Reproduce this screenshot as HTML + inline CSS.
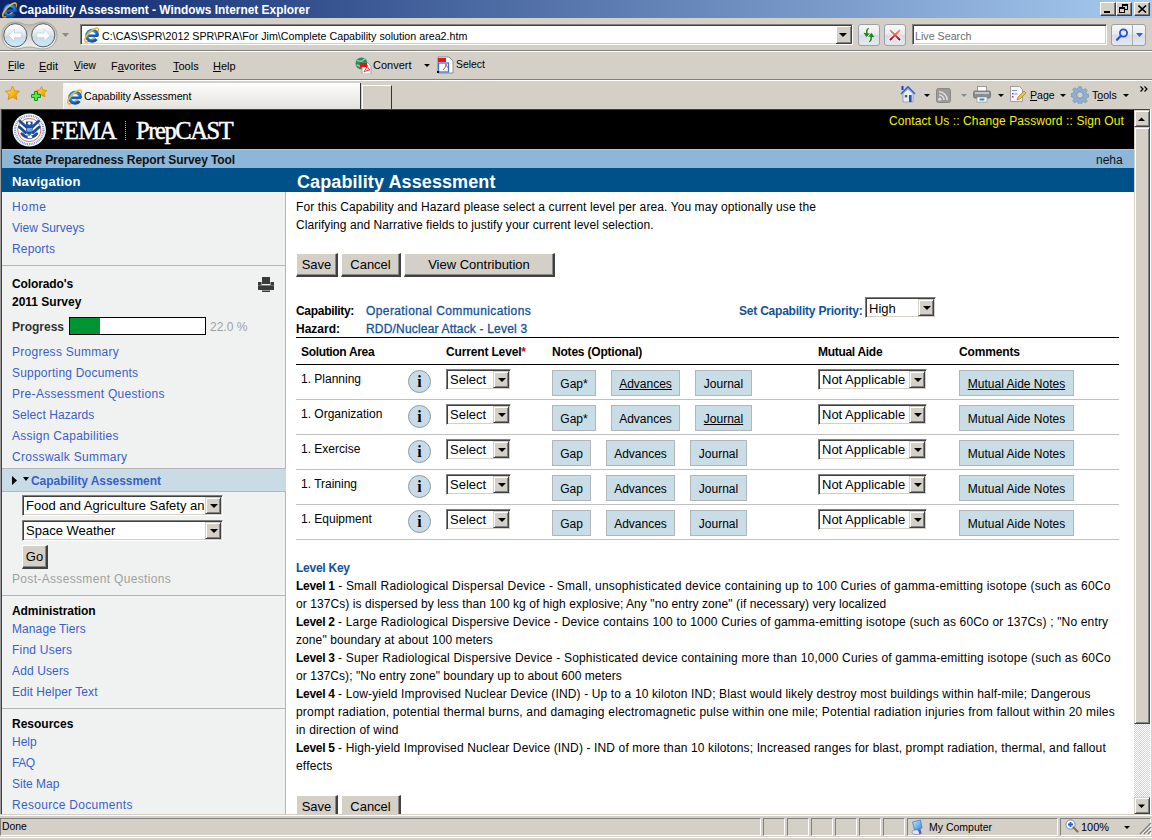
<!DOCTYPE html>
<html><head><meta charset="utf-8">
<style>
*{margin:0;padding:0;box-sizing:border-box}
html,body{width:1152px;height:840px;overflow:hidden;background:#d4d0c8;font-family:"Liberation Sans",sans-serif;font-size:12px;color:#000;position:relative}
.a{position:absolute;white-space:nowrap}
.t11{font-size:11px}
.lnk{color:#3a66c6;font-size:12.5px}
.b{font-weight:bold}
.u{text-decoration:underline}
/* chrome */
#title{left:0;top:0;width:1152px;height:18px;background:linear-gradient(to right,#0a246a,#a6caf0)}
.wbtn{top:2px;width:16px;height:14px;background:#d4d0c8;border-top:1px solid #fff;border-left:1px solid #fff;border-right:1px solid #404040;border-bottom:1px solid #404040;box-shadow:inset -1px -1px 0 #808080}
.hl{height:1px}
.sunk{background:#fff;border-top:1px solid #808080;border-left:1px solid #808080;border-right:1px solid #fff;border-bottom:1px solid #fff;box-shadow:inset 1px 1px 0 #404040,inset -1px -1px 0 #d4d0c8}
.rb{border:1px solid #9aa0a8;border-radius:3px;background:linear-gradient(#f7f7f5 0%,#e9ebef 45%,#d6dbe6 52%,#e6e9ee 100%)}
/* page */
.sel{background:#fff;border-top:1px solid #808080;border-left:1px solid #808080;border-right:1px solid #fff;border-bottom:1px solid #fff;box-shadow:inset 1px 1px 0 #404040,inset -1px -1px 0 #d4d0c8}
.selbtn{position:absolute;top:1px;right:1px;width:16px;bottom:1px;background:#d4d0c8;border-top:1px solid #d4d0c8;border-left:1px solid #d4d0c8;border-right:1px solid #404040;border-bottom:1px solid #404040;box-shadow:inset 1px 1px 0 #fff,inset -1px -1px 0 #808080}
.selbtn:after{content:"";position:absolute;left:4px;top:6px;border-left:4px solid transparent;border-right:4px solid transparent;border-top:4px solid #000}
.btn{background:#d4d0c8;border-top:1px solid #fff;border-left:1px solid #fff;border-right:2px solid #404040;border-bottom:2px solid #404040;box-shadow:inset -1px -1px 0 #888;font-size:13px;text-align:center}
.nb{background:#c9dde6;border:1px solid #b2b6ba;text-align:center;height:26px;line-height:26px;font-size:12px}
.info{width:23px;height:23px;border-radius:50%;background:#c8dce8;border:1px solid #8a9ba6;text-align:center;font-family:"Liberation Serif",serif;font-weight:bold;font-size:16px;line-height:21px}
.rowline{left:296px;width:823px;height:1px;background:#c0c0c0}

.sbtn{background:#d4d0c8;border-top:1px solid #d4d0c8;border-left:1px solid #d4d0c8;border-right:1px solid #404040;border-bottom:1px solid #404040;box-shadow:inset 1px 1px 0 #fff,inset -1px -1px 0 #808080}
</style></head><body>
<!-- TITLE BAR -->
<div id="title" class="a"></div>
<svg class="a" style="left:0px;top:0px" width="19" height="19" viewBox="0 0 17 17">
 <defs><radialGradient id="ieg" cx="0.4" cy="0.35" r="0.7"><stop offset="0" stop-color="#9fe0ff"/><stop offset="0.5" stop-color="#2a9ae6"/><stop offset="1" stop-color="#0b4fb0"/></radialGradient></defs>
 <path d="M2.8 14.8A8.2 3 -45 0 0 14.4 3.2" fill="none" stroke="#e8a020" stroke-width="1.2"/>
 <path d="M13.9 9.6A4.8 4.8 0 1 0 12.9 12.6" fill="none" stroke="url(#ieg)" stroke-width="3"/><rect x="5.6" y="8.5" width="9" height="2.2" fill="#0a5ad0"/>
 <path d="M14.4 3.2A8.2 3 -45 0 0 2.8 14.8" fill="none" stroke="#f5b82a" stroke-width="1.5"/>
</svg>
<div class="a b" style="left:19px;top:3px;color:#fff;font-size:11.9px">Capability Assessment - Windows Internet Explorer</div>
<div class="a wbtn" style="left:1100px"><div style="position:absolute;left:3px;top:8px;width:6px;height:2px;background:#000"></div></div>
<div class="a wbtn" style="left:1116px"><div style="position:absolute;left:5px;top:1px;width:6px;height:6px;border:1px solid #000;border-top-width:2px"></div><div style="position:absolute;left:2px;top:4px;width:6px;height:6px;border:1px solid #000;border-top-width:2px;background:#d4d0c8"></div></div>
<div class="a wbtn" style="left:1134px"><svg style="position:absolute;left:3px;top:2px" width="9" height="8" viewBox="0 0 9 8"><path d="M0.5 0.5L8 7.5M8 0.5L0.5 7.5" stroke="#000" stroke-width="1.6"/></svg></div>

<!-- ADDRESS ROW -->
<svg class="a" style="left:1px;top:20px" width="58" height="31" viewBox="0 0 58 31">
 <defs>
  <linearGradient id="bbg" x1="0" y1="0" x2="0" y2="1"><stop offset="0" stop-color="#ffffff"/><stop offset="0.45" stop-color="#dfe8f0"/><stop offset="0.55" stop-color="#c9dbe8"/><stop offset="1" stop-color="#c4ecfa"/></linearGradient>
  <linearGradient id="hous" x1="0" y1="0" x2="0" y2="1"><stop offset="0" stop-color="#b8b6b0"/><stop offset="1" stop-color="#f4f3f0"/></linearGradient>
 </defs>
 <path d="M14 2c6 0 8 3 14 3s8-3 14-3c8 0 14 6 14 13.5S50 29 42 29c-6 0-8-2-14-2s-8 2-14 2C6 29 1 23 1 15.5S6 2 14 2z" fill="url(#hous)" stroke="#aaa8a2" stroke-width="1"/>
 <circle cx="14.3" cy="15.3" r="11.6" fill="url(#bbg)" stroke="#5b5e62" stroke-width="1"/>
 <circle cx="42.2" cy="15.3" r="11.6" fill="url(#bbg)" stroke="#5b5e62" stroke-width="1"/>
 <path d="M7.5 15.5l6-6.2v3.8h7.2v4.6h-7.2v3.8z" fill="#fff" stroke="#b9c6d0" stroke-width="0.6"/>
 <path d="M49 15.5l-6-6.2v3.8h-7.2v4.6h7.2v3.8z" fill="#fff" stroke="#b9c6d0" stroke-width="0.6"/>
</svg>
<svg class="a" style="left:62px;top:33px" width="7" height="4"><path d="M0 0h7L3.5 4z" fill="#8a8a8a"/></svg>
<div class="a sunk" style="left:80px;top:24px;width:773px;height:21px"></div>
<svg class="a" style="left:82px;top:25px" width="19" height="19" viewBox="0 0 17 17">
 <path d="M2.8 14.8A8.2 3 -45 0 0 14.4 3.2" fill="none" stroke="#e8a020" stroke-width="1.2"/>
 <path d="M13.9 9.6A4.8 4.8 0 1 0 12.9 12.6" fill="none" stroke="url(#ieg)" stroke-width="3"/><rect x="5.6" y="8.5" width="9" height="2.2" fill="#0a5ad0"/>
 <path d="M14.4 3.2A8.2 3 -45 0 0 2.8 14.8" fill="none" stroke="#f5b82a" stroke-width="1.5"/>
</svg>
<div class="a" style="left:102px;top:30px;font-size:10.7px">C:\CAS\SPR\2012 SPR\PRA\For Jim\Complete Capability solution area2.htm</div>
<div class="a" style="left:836px;top:26px;width:16px;height:18px;background:#d4d0c8;border-right:1px solid #404040;border-bottom:1px solid #404040;box-shadow:inset 1px 1px 0 #fff,inset -1px -1px 0 #808080"><div style="position:absolute;left:3px;top:7px;border-left:4px solid transparent;border-right:4px solid transparent;border-top:4px solid #000"></div></div>
<div class="a rb" style="left:858px;top:24px;width:22px;height:22px"></div>
<svg class="a" style="left:858px;top:24px" width="22" height="22" viewBox="0 0 22 22">
 <g fill="#1e8a1e" stroke="#fff" stroke-width="0.6" paint-order="stroke">
 <path d="M10.6 3.8c-1.9 0.6-2.9 2.4-2.6 5.2l-2.6-0.3 3.1 4.6 3.4-4.1-2.3 0c-0.2-2 0.3-3.8 1.6-4.9z"/>
 <path d="M11.4 18.2c1.9-0.6 2.9-2.4 2.6-5.2l2.6 0.3-3.1-4.6-3.4 4.1 2.3 0c0.2 2-0.3 3.8-1.6 4.9z"/>
 </g>
</svg>
<div class="a rb" style="left:884px;top:24px;width:22px;height:22px"></div>
<svg class="a" style="left:888px;top:28px" width="14" height="14" viewBox="0 0 14 14">
 <defs><linearGradient id="xg" x1="0" y1="0" x2="0" y2="1"><stop offset="0" stop-color="#f08a8a"/><stop offset="0.5" stop-color="#e05a5a"/><stop offset="1" stop-color="#8a0a0a"/></linearGradient></defs>
 <path d="M2.5 2.5L11.5 11.5M11.5 2.5L2.5 11.5" stroke="#fff" stroke-width="3.6" stroke-linecap="round"/>
 <path d="M2.5 2.5L11.5 11.5M11.5 2.5L2.5 11.5" stroke="url(#xg)" stroke-width="2" stroke-linecap="round"/>
</svg>
<div class="a sunk" style="left:912px;top:24px;width:195px;height:21px"></div>
<div class="a" style="left:915px;top:30px;color:#6d6d6d;font-size:10.7px">Live Search</div>
<div class="a rb" style="left:1111px;top:24px;width:35px;height:22px"></div>
<div class="a" style="left:1132px;top:25px;width:1px;height:20px;background:#a8aeb6"></div>
<svg class="a" style="left:1114px;top:27px" width="16" height="16" viewBox="0 0 16 16"><circle cx="9.5" cy="6" r="3.6" fill="none" stroke="#2050e0" stroke-width="1.8"/><path d="M7 8.7L3 12.8" stroke="#2050e0" stroke-width="2.2" stroke-linecap="round"/></svg>
<svg class="a" style="left:1136px;top:33px" width="7" height="4"><path d="M0 0h7L3.5 4z" fill="#2a5ee8"/></svg>
<div class="a hl" style="left:0;top:50px;width:1152px;background:#808080"></div>
<div class="a hl" style="left:0;top:51px;width:1152px;background:#fff"></div>

<!-- MENU ROW -->
<div class="a t11" style="left:8px;top:60px;font-size:10.4px"><u>F</u>ile</div>
<div class="a t11" style="left:39px;top:60px"><u>E</u>dit</div>
<div class="a t11" style="left:74px;top:60px;font-size:10.2px"><u>V</u>iew</div>
<div class="a t11" style="left:111px;top:60px">F<u>a</u>vorites</div>
<div class="a t11" style="left:173px;top:60px"><u>T</u>ools</div>
<div class="a t11" style="left:213px;top:60px"><u>H</u>elp</div>
<svg class="a" style="left:355px;top:57px" width="17" height="17" viewBox="0 0 17 17">
 <circle cx="6.5" cy="6.5" r="6" fill="#2f8f3f"/><path d="M2 4c2-1 3 1 5 0s2-3 4-2M1.5 8c2 0 3 2 5 1" stroke="#7fd0ff" stroke-width="1.3" fill="none"/>
 <path d="M7 6h6l3 3v8H7z" fill="#fff" stroke="#888" stroke-width="0.7"/><rect x="5" y="6" width="7" height="4" fill="#e8121a"/>
 <path d="M9 15c2-3 3-5 3-7 0 2 2 4 3 5-2 0-4 1-6 2z" fill="none" stroke="#d02020" stroke-width="0.9"/>
</svg>
<div class="a t11" style="left:373px;top:59px">Convert</div>
<svg class="a" style="left:424px;top:64px" width="6" height="3"><path d="M0 0h6L3 3z" fill="#000"/></svg>
<svg class="a" style="left:437px;top:56px" width="17" height="18" viewBox="0 0 17 18">
 <path d="M1 1h11l4 4v12H1z" fill="#fff" stroke="#7a7a7a" stroke-width="0.8"/><rect x="1" y="2" width="8" height="4" fill="#e8121a"/>
 <rect x="1.5" y="7" width="10" height="9" fill="none" stroke="#3878d8" stroke-width="1.3"/><path d="M6 14c2-2 3-4 3-6 0 2 1 3 3 4" fill="none" stroke="#d03030" stroke-width="0.9"/><rect x="0" y="15" width="2" height="2" fill="#000"/>
</svg>
<div class="a t11" style="left:456px;top:59px;font-size:10.4px">Select</div>
<div class="a hl" style="left:0;top:79px;width:1152px;background:#808080"></div>
<div class="a hl" style="left:0;top:80px;width:1152px;background:#fff"></div>

<!-- TAB ROW -->
<svg class="a" style="left:4px;top:85px" width="17" height="17" viewBox="0 0 17 17">
 <defs><linearGradient id="stg" x1="0" y1="0" x2="1" y2="1"><stop offset="0" stop-color="#ffe98a"/><stop offset="0.5" stop-color="#fbb81c"/><stop offset="1" stop-color="#f09000"/></linearGradient></defs>
 <path d="M8.5 1.2l2.1 4.5 4.9 0.6-3.6 3.3 1 4.9-4.4-2.4-4.4 2.4 1-4.9L1.5 6.3l4.9-0.6z" fill="url(#stg)" stroke="#c88a00" stroke-width="0.8"/>
</svg>
<svg class="a" style="left:31px;top:85px" width="17" height="17" viewBox="0 0 17 17">
 <path d="M10.5 1.5l1.6 3.5 3.8 0.5-2.8 2.6 0.8 3.8-3.4-1.9-3.4 1.9 0.8-3.8-2.8-2.6 3.8-0.5z" fill="url(#stg)" stroke="#c88a00" stroke-width="0.7"/>
 <path d="M3.5 6.5h3v3h3v3h-3v3h-3v-3h-3v-3h3z" fill="#5ee05e" stroke="#0a9a0a" stroke-width="1"/>
</svg>
<div class="a" style="left:63px;top:83px;width:298px;height:26px;background:linear-gradient(#fdfdfd,#e4e2dc);border-right:1px solid #333;border-left:1px solid #f4f4f4"></div>
<svg class="a" style="left:65px;top:87px" width="19" height="19" viewBox="0 0 17 17">
 <path d="M2.8 14.8A8.2 3 -45 0 0 14.4 3.2" fill="none" stroke="#e8a020" stroke-width="1.2"/>
 <path d="M13.9 9.6A4.8 4.8 0 1 0 12.9 12.6" fill="none" stroke="url(#ieg)" stroke-width="3"/><rect x="5.6" y="8.5" width="9" height="2.2" fill="#0a5ad0"/>
 <path d="M14.4 3.2A8.2 3 -45 0 0 2.8 14.8" fill="none" stroke="#f5b82a" stroke-width="1.5"/>
</svg>
<div class="a" style="left:84px;top:90px;font-size:10.7px">Capability Assessment</div>
<div class="a" style="left:362px;top:85px;width:30px;height:24px;background:#d4d0c8;border-top:1px solid #fff;border-left:1px solid #fff;border-right:1px solid #333"></div>
<!-- right command bar -->
<svg class="a" style="left:899px;top:85px" width="18" height="18" viewBox="0 0 18 18">
 <path d="M2 9L9 2l7 7" fill="none" stroke="#2f5ee0" stroke-width="1.6"/><rect x="2.5" y="1" width="2" height="4" fill="#1b3fd0"/>
 <path d="M4 8.5L9 3.8l5 4.7V17H4z" fill="#e8ecf4" stroke="#8a94a8" stroke-width="0.8"/><rect x="10" y="10" width="2.6" height="7" fill="#1d4fb8"/><rect x="5.8" y="10" width="2.4" height="2.4" fill="#4a5a70"/>
</svg>
<svg class="a" style="left:924px;top:94px" width="6" height="3"><path d="M0 0h6L3 3z" fill="#000"/></svg>
<svg class="a" style="left:936px;top:88px" width="16" height="16" viewBox="0 0 16 16">
 <rect x="0.5" y="0.5" width="14" height="14" rx="2" fill="#9c9a96" stroke="#8a8884"/><circle cx="3.8" cy="11.2" r="1.6" fill="#e0dfdb"/><path d="M3 7a5 5 0 0 1 5 5M3 3.8a8.2 8.2 0 0 1 8.2 8.2" fill="none" stroke="#e0dfdb" stroke-width="1.6"/>
</svg>
<svg class="a" style="left:961px;top:94px" width="6" height="3"><path d="M0 0h6L3 3z" fill="#8a8a8a"/></svg>
<svg class="a" style="left:973px;top:86px" width="18" height="17" viewBox="0 0 18 17">
 <rect x="4.5" y="0.5" width="9" height="5" fill="#fff" stroke="#888" stroke-width="0.8"/><rect x="0.5" y="5" width="17" height="7" rx="1.5" fill="#8a8c90" stroke="#6a6c70" stroke-width="0.8"/><rect x="2" y="6" width="14" height="2" fill="#c4c6ca"/><rect x="4" y="11" width="10" height="5" fill="#fff" stroke="#888" stroke-width="0.6"/><rect x="6.5" y="12.5" width="5" height="2" fill="#2a8ad0"/>
</svg>
<svg class="a" style="left:998px;top:94px" width="6" height="3"><path d="M0 0h6L3 3z" fill="#000"/></svg>
<svg class="a" style="left:1009px;top:85px" width="18" height="18" viewBox="0 0 18 18">
 <path d="M1.5 1.5h9l3 3v12h-12z" fill="#f4f6fa" stroke="#8a8e96" stroke-width="0.8"/><rect x="3" y="5" width="5" height="1" fill="#8090b0"/><rect x="3" y="8" width="1.5" height="1.5" fill="#4060c0"/><rect x="5.5" y="8.5" width="3" height="1" fill="#8090b0"/><rect x="3" y="11" width="1.5" height="1.5" fill="#c04040"/><path d="M8 15l1-3 6-6 2 2-6 6z" fill="#f0c040" stroke="#a07010" stroke-width="0.6"/>
</svg>
<div class="a" style="left:1030px;top:89px;font-size:10.6px"><u>P</u>age</div>
<svg class="a" style="left:1060px;top:94px" width="6" height="3"><path d="M0 0h6L3 3z" fill="#000"/></svg>
<svg class="a" style="left:1071px;top:86px" width="18" height="18" viewBox="0 0 18 18">
 <g fill="#8fb0d0" stroke="#6a8aac" stroke-width="0.6"><path d="M7.6 0.8h2.8l0.4 2.3 1.6 0.7 1.9-1.4 2 2-1.4 1.9 0.7 1.6 2.3 0.4v2.8l-2.3 0.4-0.7 1.6 1.4 1.9-2 2-1.9-1.4-1.6 0.7-0.4 2.3H7.6l-0.4-2.3-1.6-0.7-1.9 1.4-2-2 1.4-1.9-0.7-1.6L0.1 10.4V7.6l2.3-0.4 0.7-1.6-1.4-1.9 2-2 1.9 1.4 1.6-0.7z"/></g>
 <circle cx="9" cy="9" r="3.3" fill="#d4d0c8" stroke="#6a8aac" stroke-width="0.8"/>
</svg>
<div class="a" style="left:1092px;top:89px;font-size:10.6px">T<u>o</u>ols</div>
<svg class="a" style="left:1123px;top:94px" width="6" height="3"><path d="M0 0h6L3 3z" fill="#000"/></svg>
<svg class="a" style="left:1140px;top:86px" width="8" height="6" viewBox="0 0 8 6"><path d="M0.5 0.5L3 3 0.5 5.5M4.5 0.5L7 3 4.5 5.5" fill="none" stroke="#000" stroke-width="1.2"/></svg>


<div class="a" style="left:0px;top:109px;width:1134px;height:705px;background:#fff"></div>
<div class="a" style="left:0px;top:109px;width:1150px;height:1px;background:#404040"></div>
<div class="a" style="left:0px;top:109px;width:1px;height:705px;background:#9a9a9a"></div>
<div class="a" style="left:1px;top:110px;width:1px;height:704px;background:#404040"></div>
<div class="a" style="left:2px;top:110px;width:1132px;height:39px;background:#000"></div>
<div class="a" style="left:2px;top:149px;width:1132px;height:19px;background:#8cb7d9;border-top:1px solid #a9c9e3"></div>
<div class="a" style="left:2px;top:168px;width:1132px;height:24px;background:#00518a"></div>
<div class="a" style="left:2px;top:192px;width:284px;height:622px;background:#f0f2f2;border-right:1px solid #b0b4b8"></div>
<svg class="a" style="left:12px;top:113px" width="35" height="35" viewBox="0 0 35 35">
 <circle cx="17.3" cy="17" r="16.6" fill="#fff"/>
 <circle cx="17.3" cy="17" r="14.2" fill="none" stroke="#6d8fc8" stroke-width="2.2" stroke-dasharray="0.9 0.9"/>
 <circle cx="17.3" cy="17" r="11.6" fill="none" stroke="#e06a6a" stroke-width="1"/>
 <g stroke="#1c4b98" stroke-width="2.8" stroke-linecap="round" fill="none">
  <path d="M8 8.3L14.6 14.2M7.4 14L13.6 19.6M26.6 8.3L20 14.2M27.2 14L21 19.6"/>
  <path d="M9.8 20.8Q17.3 28.6 24.8 20.8"/>
 </g>
 <path d="M14 8.6h6.6v8.8c0 2.6-1.6 4.2-3.3 5-1.7-0.8-3.3-2.4-3.3-5z" fill="#1d50a2"/>
 <circle cx="17.3" cy="10.2" r="1.5" fill="#fff"/>
 <path d="M14.8 15h5v3.6h-5z" fill="#7ea9dc"/>
 <ellipse cx="16.2" cy="22.4" rx="2" ry="1" fill="#7cc040"/>
 <ellipse cx="18" cy="24.2" rx="2.5" ry="1.1" fill="#fff"/>
</svg>
<div class="a " style="left:51px;top:117px;font-size:24.5px;color:#fff;font-family:'Liberation Serif',serif;letter-spacing:-0.7px;-webkit-text-stroke:0.5px #fff">FEMA</div>
<div class="a" style="left:125px;top:121px;width:1px;height:19px;border-left:1px dotted #bbb"></div>
<div class="a " style="left:136px;top:117px;font-size:24.5px;color:#fff;font-family:'Liberation Serif',serif;letter-spacing:-1.4px;-webkit-text-stroke:0.5px #fff">PrepCAST</div>
<div id="fcc3b2a62" class="a " style="left:889px;top:114px;font-size:12px;color:#f2f200;letter-spacing:0.100px">Contact Us :: Change Password :: Sign Out</div>
<div id="f671a5988" class="a " style="left:13px;top:153px;font-size:12px;font-weight:bold;color:#111;letter-spacing:-0.083px">State Preparedness Report Survey Tool</div>
<div id="f1306169b" class="a " style="left:1096px;top:153px;font-size:12px;color:#111;letter-spacing:0.000px">neha</div>
<div id="f56d1bba2" class="a " style="left:12px;top:174px;font-size:13px;font-weight:bold;color:#fff;letter-spacing:0.222px">Navigation</div>
<div id="f54e18f18" class="a " style="left:297px;top:172px;font-size:18px;font-weight:bold;color:#fff;letter-spacing:0.100px">Capability Assessment</div>
<div id="f39b2e3be" class="a " style="left:12px;top:200px;font-size:12px;color:#3a5fc8;letter-spacing:0.667px">Home</div>
<div id="f78aeb716" class="a " style="left:12px;top:221px;font-size:12px;color:#3a5fc8;letter-spacing:0.000px">View Surveys</div>
<div id="fc1f2a1b7" class="a " style="left:12px;top:242px;font-size:12px;color:#3a5fc8;letter-spacing:0.167px">Reports</div>
<div class="a" style="left:2px;top:265px;width:284px;height:1px;background:#b4b4b4"></div>
<div id="f96180167" class="a " style="left:12px;top:277px;font-size:12px;font-weight:bold;letter-spacing:-0.111px">Colorado's</div>
<div id="feb85b7eb" class="a " style="left:12px;top:295px;font-size:12px;font-weight:bold;letter-spacing:0.000px">2011 Survey</div>
<svg class="a" style="left:257px;top:276px" width="18" height="17" viewBox="0 0 18 17"><g fill="#3a3a3a"><rect x="5" y="1" width="8" height="7"/><rect x="1" y="6" width="3.5" height="4"/><rect x="13.5" y="6" width="3.5" height="4"/><rect x="1" y="9.5" width="16" height="4.5" rx="0.5"/><rect x="5" y="14.5" width="8" height="1.5"/></g><rect x="1" y="9" width="16" height="0.8" fill="#777"/></svg>
<div id="f32c4b426" class="a " style="left:12px;top:320px;font-size:12px;font-weight:bold;color:#333;letter-spacing:0.000px">Progress</div>
<div class="a" style="left:69px;top:317px;width:137px;height:18px;border:1px solid #000;background:#fff"></div>
<div class="a" style="left:70px;top:318px;width:30px;height:16px;background:#009432"></div>
<div id="f507f5932" class="a " style="left:210px;top:320px;font-size:12px;color:#a0a0a0;letter-spacing:0.000px">22.0 %</div>
<div id="f169bb2ea" class="a " style="left:12px;top:345px;font-size:12px;color:#3a5fc8;letter-spacing:0.267px">Progress Summary</div>
<div id="f11317721" class="a " style="left:12px;top:366px;font-size:12px;color:#3a5fc8;letter-spacing:0.211px">Supporting Documents</div>
<div id="fb53512f3" class="a " style="left:12px;top:387px;font-size:12px;color:#3a5fc8;letter-spacing:0.304px">Pre-Assessment Questions</div>
<div id="f4f0ad0ca" class="a " style="left:12px;top:408px;font-size:12px;color:#3a5fc8;letter-spacing:0.077px">Select Hazards</div>
<div id="f4a840b52" class="a " style="left:12px;top:429px;font-size:12px;color:#3a5fc8;letter-spacing:0.278px">Assign Capabilities</div>
<div id="faa5ef43d" class="a " style="left:12px;top:450px;font-size:12px;color:#3a5fc8;letter-spacing:0.312px">Crosswalk Summary</div>
<div class="a" style="left:2px;top:468px;width:284px;height:24px;background:#c9dce6;border-top:1px solid #b4b8bc;border-bottom:1px solid #b4b8bc"></div>
<svg class="a" style="left:12px;top:476px" width="18" height="10"><path d="M0 0v9l5-4.5z" fill="#000"/><path d="M11 1h6l-3 4z" fill="#000"/></svg>
<div id="f2d7a3814" class="a " style="left:31px;top:474px;font-size:12px;font-weight:bold;color:#3a5fc8;letter-spacing:-0.050px">Capability Assessment</div>
<div class="a sel" style="left:22px;top:495px;width:201px;height:21px;overflow:hidden"><span style="position:absolute;left:3px;top:2px;font-size:13px">Food and Agriculture Safety an</span><div class="selbtn"></div></div>
<div class="a sel" style="left:22px;top:520px;width:201px;height:21px"><span style="position:absolute;left:3px;top:2px;font-size:13px">Space Weather</span><div class="selbtn"></div></div>
<div class="a btn" style="left:22px;top:545px;width:26px;height:24px;line-height:21px">Go</div>
<div id="f857d739d" class="a " style="left:12px;top:572px;font-size:12px;color:#a0a0a0;letter-spacing:0.333px">Post-Assessment Questions</div>
<div class="a" style="left:2px;top:595px;width:284px;height:1px;background:#b4b4b4"></div>
<div id="f14e62f7c" class="a " style="left:12px;top:604px;font-size:12px;font-weight:bold;letter-spacing:-0.077px">Administration</div>
<div id="ffc10622e" class="a " style="left:12px;top:622px;font-size:12px;color:#3a5fc8;letter-spacing:0.091px">Manage Tiers</div>
<div id="f9819d8a3" class="a " style="left:12px;top:643px;font-size:12px;color:#3a5fc8;letter-spacing:0.222px">Find Users</div>
<div id="f9529dad3" class="a " style="left:12px;top:664px;font-size:12px;color:#3a5fc8;letter-spacing:0.125px">Add Users</div>
<div id="f2de056bb" class="a " style="left:12px;top:685px;font-size:12px;color:#3a5fc8;letter-spacing:0.067px">Edit Helper Text</div>
<div class="a" style="left:2px;top:708px;width:284px;height:1px;background:#b4b4b4"></div>
<div id="fe046d457" class="a " style="left:12px;top:717px;font-size:12px;font-weight:bold;letter-spacing:0.000px">Resources</div>
<div id="fc5cf852e" class="a " style="left:12px;top:735px;font-size:12px;color:#3a5fc8;letter-spacing:0.000px">Help</div>
<div id="f3657ed17" class="a " style="left:12px;top:756px;font-size:12px;color:#3a5fc8;letter-spacing:-0.500px">FAQ</div>
<div id="ff107baec" class="a " style="left:12px;top:777px;font-size:12px;color:#3a5fc8;letter-spacing:0.000px">Site Map</div>
<div id="f9d7212ae" class="a " style="left:12px;top:798px;font-size:12px;color:#3a5fc8;letter-spacing:0.294px">Resource Documents</div>
<div id="fc782c606" class="a " style="left:296px;top:200px;font-size:12px;letter-spacing:0.094px">For this Capability and Hazard please select a current level per area. You may optionally use the</div>
<div id="f905373ae" class="a " style="left:296px;top:218px;font-size:12px;letter-spacing:0.056px">Clarifying and Narrative fields to justify your current level selection.</div>
<div class="a btn" style="left:296px;top:253px;width:42px;height:24px;line-height:21px">Save</div>
<div class="a btn" style="left:341px;top:253px;width:60px;height:24px;line-height:21px">Cancel</div>
<div class="a btn" style="left:404px;top:253px;width:151px;height:24px;line-height:21px">View Contribution</div>
<div id="f5d25e76c" class="a " style="left:296px;top:304px;font-size:12px;font-weight:bold;letter-spacing:-0.300px">Capability:</div>
<div id="facda5955" class="a " style="left:366px;top:304px;font-size:12px;color:#125298;letter-spacing:0.400px;-webkit-text-stroke:0.3px #125298">Operational Communications</div>
<div id="fc26c44c4" class="a " style="left:296px;top:322px;font-size:12px;font-weight:bold;letter-spacing:0.000px">Hazard:</div>
<div id="f79f4229b" class="a " style="left:366px;top:322px;font-size:12px;color:#125298;letter-spacing:0.185px;-webkit-text-stroke:0.3px #125298">RDD/Nuclear Attack - Level 3</div>
<div id="fa37855f9" class="a " style="left:739px;top:304px;font-size:12px;font-weight:bold;color:#125298;letter-spacing:-0.217px">Set Capability Priority:</div>
<div class="a sel" style="left:865px;top:297px;width:71px;height:21px"><span style="position:absolute;left:3px;top:3px;font-size:13px">High</span><div class="selbtn"></div></div>
<div class="a" style="left:296px;top:337px;width:823px;height:1px;background:#000"></div>
<div id="fa442db9e" class="a " style="left:301px;top:345px;font-size:12px;font-weight:bold;letter-spacing:-0.333px">Solution Area</div>
<div id="fa9d67a1b" class="a " style="left:446px;top:345px;font-size:12px;font-weight:bold;letter-spacing:-0.154px">Current Level<span style="color:#e00000">*</span></div>
<div id="fb2e27e51" class="a " style="left:552px;top:345px;font-size:12px;font-weight:bold;letter-spacing:-0.200px">Notes (Optional)</div>
<div id="f3f5606dd" class="a " style="left:818px;top:345px;font-size:12px;font-weight:bold;letter-spacing:-0.300px">Mutual Aide</div>
<div id="f00c59cda" class="a " style="left:959px;top:345px;font-size:12px;font-weight:bold;letter-spacing:-0.143px">Comments</div>
<div class="a" style="left:296px;top:364px;width:823px;height:1px;background:#000"></div>
<div class="a " style="left:301px;top:372px;font-size:12px">1. Planning</div>
<div class="a info" style="left:408px;top:370px">i</div>
<div class="a sel" style="left:446px;top:369px;width:65px;height:21px"><span style="position:absolute;left:3px;top:2px;font-size:13px">Select</span><div class="selbtn"></div></div>
<div class="a nb" style="left:552px;top:370px;width:44px">Gap*</div>
<div class="a nb u" style="left:611px;top:370px;width:69px">Advances</div>
<div class="a nb" style="left:695px;top:370px;width:57px">Journal</div>
<div class="a sel" style="left:818px;top:369px;width:109px;height:21px"><span style="position:absolute;left:3px;top:2px;font-size:13px">Not Applicable</span><div class="selbtn"></div></div>
<div class="a nb u" style="left:959px;top:370px;width:115px">Mutual Aide Notes</div>
<div class="a" style="left:296px;top:399px;width:823px;height:1px;background:#c0c0c0"></div>
<div class="a " style="left:301px;top:407px;font-size:12px">1. Organization</div>
<div class="a info" style="left:408px;top:405px">i</div>
<div class="a sel" style="left:446px;top:404px;width:65px;height:21px"><span style="position:absolute;left:3px;top:2px;font-size:13px">Select</span><div class="selbtn"></div></div>
<div class="a nb" style="left:552px;top:405px;width:44px">Gap*</div>
<div class="a nb" style="left:611px;top:405px;width:69px">Advances</div>
<div class="a nb u" style="left:695px;top:405px;width:57px">Journal</div>
<div class="a sel" style="left:818px;top:404px;width:109px;height:21px"><span style="position:absolute;left:3px;top:2px;font-size:13px">Not Applicable</span><div class="selbtn"></div></div>
<div class="a nb" style="left:959px;top:405px;width:115px">Mutual Aide Notes</div>
<div class="a" style="left:296px;top:434px;width:823px;height:1px;background:#c0c0c0"></div>
<div class="a " style="left:301px;top:442px;font-size:12px">1. Exercise</div>
<div class="a info" style="left:408px;top:440px">i</div>
<div class="a sel" style="left:446px;top:439px;width:65px;height:21px"><span style="position:absolute;left:3px;top:2px;font-size:13px">Select</span><div class="selbtn"></div></div>
<div class="a nb" style="left:552px;top:440px;width:39px">Gap</div>
<div class="a nb" style="left:606px;top:440px;width:69px">Advances</div>
<div class="a nb" style="left:690px;top:440px;width:57px">Journal</div>
<div class="a sel" style="left:818px;top:439px;width:109px;height:21px"><span style="position:absolute;left:3px;top:2px;font-size:13px">Not Applicable</span><div class="selbtn"></div></div>
<div class="a nb" style="left:959px;top:440px;width:115px">Mutual Aide Notes</div>
<div class="a" style="left:296px;top:469px;width:823px;height:1px;background:#c0c0c0"></div>
<div class="a " style="left:301px;top:477px;font-size:12px">1. Training</div>
<div class="a info" style="left:408px;top:475px">i</div>
<div class="a sel" style="left:446px;top:474px;width:65px;height:21px"><span style="position:absolute;left:3px;top:2px;font-size:13px">Select</span><div class="selbtn"></div></div>
<div class="a nb" style="left:552px;top:475px;width:39px">Gap</div>
<div class="a nb" style="left:606px;top:475px;width:69px">Advances</div>
<div class="a nb" style="left:690px;top:475px;width:57px">Journal</div>
<div class="a sel" style="left:818px;top:474px;width:109px;height:21px"><span style="position:absolute;left:3px;top:2px;font-size:13px">Not Applicable</span><div class="selbtn"></div></div>
<div class="a nb" style="left:959px;top:475px;width:115px">Mutual Aide Notes</div>
<div class="a" style="left:296px;top:504px;width:823px;height:1px;background:#c0c0c0"></div>
<div class="a " style="left:301px;top:512px;font-size:12px">1. Equipment</div>
<div class="a info" style="left:408px;top:510px">i</div>
<div class="a sel" style="left:446px;top:509px;width:65px;height:21px"><span style="position:absolute;left:3px;top:2px;font-size:13px">Select</span><div class="selbtn"></div></div>
<div class="a nb" style="left:552px;top:510px;width:39px">Gap</div>
<div class="a nb" style="left:606px;top:510px;width:69px">Advances</div>
<div class="a nb" style="left:690px;top:510px;width:57px">Journal</div>
<div class="a sel" style="left:818px;top:509px;width:109px;height:21px"><span style="position:absolute;left:3px;top:2px;font-size:13px">Not Applicable</span><div class="selbtn"></div></div>
<div class="a nb" style="left:959px;top:510px;width:115px">Mutual Aide Notes</div>
<div class="a" style="left:296px;top:539px;width:823px;height:1px;background:#c0c0c0"></div>
<div id="f1d295955" class="a " style="left:296px;top:561px;font-size:12px;font-weight:bold;color:#125298;letter-spacing:-0.250px">Level Key</div>
<div id="f870ffaf3" class="a " style="left:296px;top:579px;font-size:12px;letter-spacing:0.215px"><b style="letter-spacing:-0.3px">Level 1</b> - Small Radiological Dispersal Device - Small, unsophisticated device containing up to 100 Curies of gamma-emitting isotope (such as 60Co</div>
<div id="f2ef87e14" class="a " style="left:296px;top:597px;font-size:12px;letter-spacing:0.073px">or 137Cs) is dispersed by less than 100 kg of high explosive; Any "no entry zone" (if necessary) very localized</div>
<div id="f029d017e" class="a " style="left:296px;top:615px;font-size:12px;letter-spacing:0.167px"><b style="letter-spacing:-0.3px">Level 2</b> - Large Radiological Dispersive Device - Device contains 100 to 1000 Curies of gamma-emitting isotope (such as 60Co or 137Cs) ; "No entry</div>
<div id="fcedbed6b" class="a " style="left:296px;top:633px;font-size:12px;letter-spacing:0.091px">zone" boundary at about 100 meters</div>
<div id="f518f0a5a" class="a " style="left:296px;top:651px;font-size:12px;letter-spacing:0.189px"><b style="letter-spacing:-0.3px">Level 3</b> - Super Radiological Dispersive Device - Sophisticated device containing more than 10,000 Curies of gamma-emitting isotope (such as 60Co</div>
<div id="f5503f99c" class="a " style="left:296px;top:669px;font-size:12px;letter-spacing:0.053px">or 137Cs); "No entry zone" boundary up to about 600 meters</div>
<div id="f86ca07e4" class="a " style="left:296px;top:687px;font-size:12px;letter-spacing:0.137px"><b style="letter-spacing:-0.3px">Level 4</b> - Low-yield Improvised Nuclear Device (IND) - Up to a 10 kiloton IND; Blast would likely destroy most buildings within half-mile; Dangerous</div>
<div id="fefce084e" class="a " style="left:296px;top:705px;font-size:12px;letter-spacing:0.192px">prompt radiation, potential thermal burns, and damaging electromagnetic pulse within one mile; Potential radiation injuries from fallout within 20 miles</div>
<div id="f71e3ebd8" class="a " style="left:296px;top:723px;font-size:12px;letter-spacing:0.158px">in direction of wind</div>
<div id="f05e28cd5" class="a " style="left:296px;top:741px;font-size:12px;letter-spacing:0.127px"><b style="letter-spacing:-0.3px">Level 5</b> - High-yield Improvised Nuclear Device (IND) - IND of more than 10 kilotons; Increased ranges for blast, prompt radiation, thermal, and fallout</div>
<div id="f95825c1e" class="a " style="left:296px;top:759px;font-size:12px;letter-spacing:0.167px">effects</div>
<div class="a" style="left:296px;top:795px;width:42px;height:19px;overflow:hidden"><div class="btn" style="width:42px;height:24px;line-height:21px">Save</div></div>
<div class="a" style="left:341px;top:795px;width:60px;height:19px;overflow:hidden"><div class="btn" style="width:60px;height:24px;line-height:21px">Cancel</div></div>
<div class="a" style="left:1134px;top:110px;width:16px;height:704px;background-color:#fff;background-image:linear-gradient(45deg,#d4d0c8 25%,transparent 25%,transparent 75%,#d4d0c8 75%),linear-gradient(45deg,#d4d0c8 25%,transparent 25%,transparent 75%,#d4d0c8 75%);background-size:2px 2px;background-position:0 0,1px 1px"></div>
<div class="a sbtn" style="left:1134px;top:110px;width:16px;height:17px"><svg style="position:absolute;left:3px;top:6px" width="8" height="5"><path d="M0 4h7L3.5 0.5z" fill="#000"/></svg></div>
<div class="a sbtn" style="left:1134px;top:127px;width:16px;height:597px"></div>
<div class="a sbtn" style="left:1134px;top:797px;width:16px;height:17px"><svg style="position:absolute;left:3px;top:6px" width="8" height="5"><path d="M0 0.5h7L3.5 4z" fill="#000"/></svg></div>
<div class="a" style="left:1150px;top:109px;width:2px;height:706px;background:#d4d0c8;border-left:1px solid #fff"></div>
<div class="a" style="left:0px;top:814px;width:1152px;height:26px;background:#d4d0c8"></div>
<div class="a" style="left:0px;top:815px;width:1152px;height:1px;background:#fff"></div>
<div class="a" style="left:0px;top:818px;width:761px;height:18px;border-top:1px solid #808080;border-left:1px solid #808080;border-right:1px solid #fff;border-bottom:1px solid #fff"></div>
<div class="a" style="left:763px;top:818px;width:22px;height:18px;border-top:1px solid #808080;border-left:1px solid #808080;border-right:1px solid #fff;border-bottom:1px solid #fff"></div>
<div class="a" style="left:787px;top:818px;width:22px;height:18px;border-top:1px solid #808080;border-left:1px solid #808080;border-right:1px solid #fff;border-bottom:1px solid #fff"></div>
<div class="a" style="left:811px;top:818px;width:22px;height:18px;border-top:1px solid #808080;border-left:1px solid #808080;border-right:1px solid #fff;border-bottom:1px solid #fff"></div>
<div class="a" style="left:835px;top:818px;width:22px;height:18px;border-top:1px solid #808080;border-left:1px solid #808080;border-right:1px solid #fff;border-bottom:1px solid #fff"></div>
<div class="a" style="left:859px;top:818px;width:22px;height:18px;border-top:1px solid #808080;border-left:1px solid #808080;border-right:1px solid #fff;border-bottom:1px solid #fff"></div>
<div class="a" style="left:883px;top:818px;width:22px;height:18px;border-top:1px solid #808080;border-left:1px solid #808080;border-right:1px solid #fff;border-bottom:1px solid #fff"></div>
<div class="a" style="left:907px;top:818px;width:151px;height:18px;border-top:1px solid #808080;border-left:1px solid #808080;border-right:1px solid #fff;border-bottom:1px solid #fff"></div>
<div class="a" style="left:1060px;top:818px;width:91px;height:18px;border-top:1px solid #808080;border-left:1px solid #808080;border-right:1px solid #fff;border-bottom:1px solid #fff"></div>
<div class="a" style="left:0px;top:837px;width:1152px;height:1px;background:#fff"></div>
<div class="a " style="left:2px;top:821px;font-size:10.4px">Done</div>
<svg class="a" style="left:911px;top:819px" width="13" height="16" viewBox="0 0 13 16"><defs><linearGradient id="scr" x1="0" y1="0" x2="1" y2="1"><stop offset="0" stop-color="#b8f0ff"/><stop offset="1" stop-color="#2a8ae8"/></linearGradient></defs>
<path d="M1.5 3l8-2 1.5 8-7.5 2z" fill="url(#scr)" stroke="#5a68b0" stroke-width="0.7"/><path d="M6 10.5l3-0.8 0.5 3" fill="#6a78c0"/><ellipse cx="5.5" cy="13.2" rx="4.5" ry="2.3" fill="#e4e6f0" stroke="#7a80b0" stroke-width="0.7"/><path d="M7 11l2.5-1 1 4.5-2 1z" fill="#5a60b0"/></svg>
<div class="a " style="left:929px;top:821px;font-size:10.5px">My Computer</div>
<svg class="a" style="left:1065px;top:819px" width="14" height="14" viewBox="0 0 14 14"><circle cx="5.5" cy="5.5" r="4.6" fill="#fff" stroke="#7a8aa0" stroke-width="1"/><path d="M3 5.5h5M5.5 3v5" stroke="#1f5fe0" stroke-width="1.8"/><path d="M8.5 8.5l4 4" stroke="#a06a30" stroke-width="2.2" stroke-linecap="round"/></svg>
<div class="a " style="left:1081px;top:821px;font-size:11px">100%</div>
<svg class="a" style="left:1124px;top:826px" width="6" height="3"><path d="M0 0h6L3 3z" fill="#000"/></svg>
<svg class="a" style="left:1139px;top:822px" width="13" height="13" viewBox="0 0 13 13"><path d="M12 1L1 12M12 5L5 12M12 9L9 12" stroke="#808080" stroke-width="1.2"/><path d="M12.6 2.4L2.4 12.6M12.6 6.4L6.4 12.6M12.6 10.4L10.4 12.6" stroke="#fff" stroke-width="0.8"/></svg>
</body></html>
